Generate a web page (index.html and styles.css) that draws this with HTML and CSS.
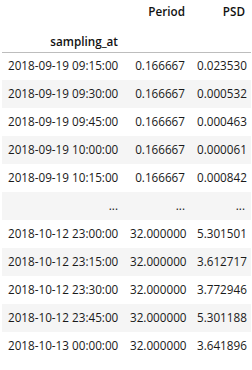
FILE: index.html
```html
<!DOCTYPE html>
<html>
<head>
<meta charset="utf-8">
<link rel="stylesheet" href="styles.css">
</head>
<body>
<div class="output">
<table class="dataframe">
  <colgroup>
    <col class="c-index">
    <col class="c-period">
    <col class="c-psd">
  </colgroup>
  <thead>
    <tr class="head1">
      <th></th>
      <th>Period</th>
      <th>PSD</th>
    </tr>
    <tr class="head2">
      <th>sampling_at</th>
      <th></th>
      <th></th>
    </tr>
  </thead>
  <tbody>
    <tr><th>2018-09-19 09:15:00</th><td>0.166667</td><td>0.023530</td></tr>
    <tr><th>2018-09-19 09:30:00</th><td>0.166667</td><td>0.000532</td></tr>
    <tr><th>2018-09-19 09:45:00</th><td>0.166667</td><td>0.000463</td></tr>
    <tr><th>2018-09-19 10:00:00</th><td>0.166667</td><td>0.000061</td></tr>
    <tr><th>2018-09-19 10:15:00</th><td>0.166667</td><td>0.000842</td></tr>
    <tr class="gap"><th>...</th><td>...</td><td>...</td></tr>
    <tr><th>2018-10-12 23:00:00</th><td>32.000000</td><td>5.301501</td></tr>
    <tr><th>2018-10-12 23:15:00</th><td>32.000000</td><td>3.612717</td></tr>
    <tr><th>2018-10-12 23:30:00</th><td>32.000000</td><td>3.772946</td></tr>
    <tr><th>2018-10-12 23:45:00</th><td>32.000000</td><td>5.301188</td></tr>
    <tr><th>2018-10-13 00:00:00</th><td>32.000000</td><td>3.641896</td></tr>
  </tbody>
</table>
</div>
</body>
</html>
```

FILE: styles.css
```css
html, body {
  margin: 0;
  padding: 0;
  background: #ffffff;
}

.output {
  padding-left: 2px;
}

.dataframe {
  border-collapse: collapse;
  border-spacing: 0;
  table-layout: fixed;
  width: 249px;
  font-family: "Open Sans", "Noto Sans", sans-serif;
  font-size: 11.7px;
  color: #1a1a1a;
}

.c-index { width: 122px; }
.c-period { width: 67px; }
.c-psd { width: 60px; }

.dataframe th,
.dataframe td {
  text-align: right;
  vertical-align: middle;
  padding: 0 6px 3px;
  line-height: 16px;
  white-space: nowrap;
  font-weight: normal;
}

.dataframe thead th {
  font-weight: 600;
  color: #111111;
  height: 26px;
  box-sizing: border-box;
}

.dataframe thead tr.head1 th {
  vertical-align: top;
  padding: 3px 6px 0;
}

.dataframe thead tr.head2 th {
  vertical-align: bottom;
  padding: 0 6px 3px;
}

.dataframe thead {
  border-bottom: 1px solid #bdbdbd;
}

.dataframe tbody tr {
  height: 28px;
}

.dataframe tbody tr:nth-child(even) {
  background: #f5f5f5;
}
```
